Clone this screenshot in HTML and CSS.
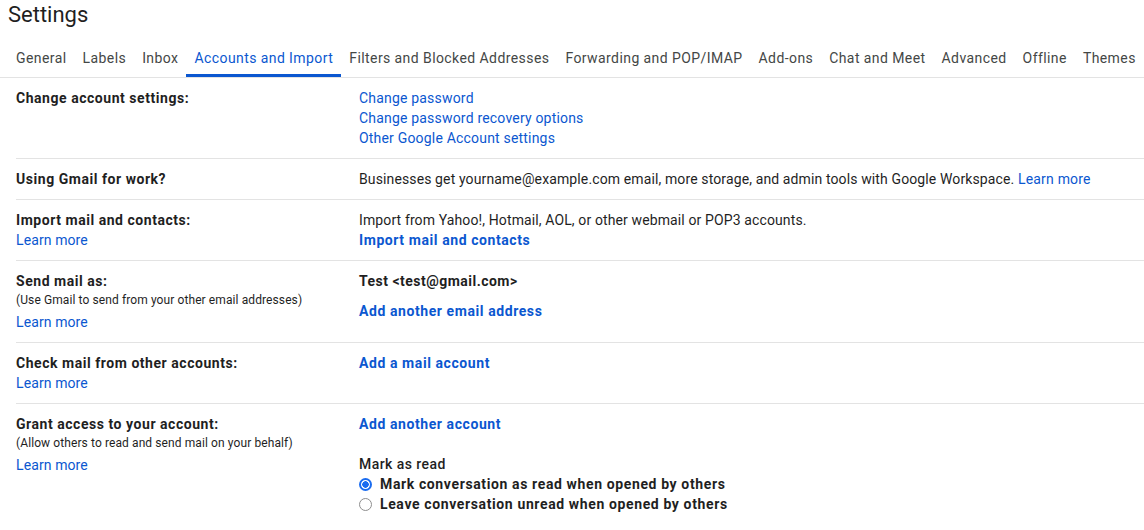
FILE: index.html
```html
<!DOCTYPE html>
<html lang="en">
<head>
<meta charset="utf-8">
<title>Settings</title>
<link rel="stylesheet" href="styles.css">
</head>
<body>
<div class="page">
  <h1 class="title">Settings</h1>
  <nav class="tabs">
    <a class="tab">General</a>
    <a class="tab">Labels</a>
    <a class="tab">Inbox</a>
    <a class="tab active">Accounts and Import</a>
    <a class="tab">Filters and Blocked Addresses</a>
    <a class="tab">Forwarding and POP/IMAP</a>
    <a class="tab">Add-ons</a>
    <a class="tab">Chat and Meet</a>
    <a class="tab">Advanced</a>
    <a class="tab">Offline</a>
    <a class="tab">Themes</a>
  </nav>

  <div class="rows">
    <section class="row">
      <div class="label"><div class="name">Change account settings:</div></div>
      <div class="value">
        <a class="link">Change password</a>
        <a class="link">Change password recovery options</a>
        <a class="link">Other Google Account settings</a>
      </div>
    </section>

    <section class="row">
      <div class="label"><div class="name">Using Gmail for work?</div></div>
      <div class="value">
        <p class="text">Businesses get yourname@example.com email, more storage, and admin tools with Google Workspace. <a class="inline-link">Learn more</a></p>
      </div>
    </section>

    <section class="row">
      <div class="label">
        <div class="name">Import mail and contacts:</div>
        <a class="link short">Learn more</a>
      </div>
      <div class="value">
        <p class="text">Import from Yahoo!, Hotmail, AOL, or other webmail or POP3 accounts.</p>
        <a class="link strong">Import mail and contacts</a>
      </div>
    </section>

    <section class="row">
      <div class="label">
        <div class="name">Send mail as:</div>
        <div class="sub">(Use Gmail to send from your other email addresses)</div>
        <a class="link short">Learn more</a>
      </div>
      <div class="value">
        <p class="text strong-text">Test &lt;test@gmail.com&gt;</p>
        <a class="link strong spaced">Add another email address</a>
      </div>
    </section>

    <section class="row">
      <div class="label">
        <div class="name">Check mail from other accounts:</div>
        <a class="link short">Learn more</a>
      </div>
      <div class="value">
        <a class="link strong">Add a mail account</a>
      </div>
    </section>

    <section class="row last">
      <div class="label">
        <div class="name">Grant access to your account:</div>
        <div class="sub">(Allow others to read and send mail on your behalf)</div>
        <a class="link short">Learn more</a>
      </div>
      <div class="value">
        <a class="link strong">Add another account</a>
        <div class="group">
          <div class="group-title">Mark as read</div>
          <label class="option"><span class="radio checked"></span>Mark conversation as read when opened by others</label>
          <label class="option"><span class="radio"></span>Leave conversation unread when opened by others</label>
        </div>
      </div>
    </section>
  </div>
</div>
</body>
</html>
```

FILE: styles.css
```css
* { box-sizing: border-box; }

body {
  margin: 0;
  background: #ffffff;
  color: #1f1f1f;
  font-family: Roboto, "Liberation Sans", Arial, sans-serif;
  font-size: 14px;
  overflow: hidden;
}

.title {
  margin: 0;
  padding-left: 8px;
  font-size: 22px;
  font-weight: 400;
  line-height: 30px;
  color: #1f1f1f;
}

.tabs {
  display: flex;
  margin-top: 8px;
  padding-left: 8px;
  border-bottom: 1px solid #e3e3e3;
  white-space: nowrap;
}

.tab {
  padding: 10px 8px 6px;
  line-height: 20px;
  font-size: 14px;
  letter-spacing: 0.42px;
  color: #444746;
  border-bottom: 3px solid transparent;
}

.tab.active {
  color: #0b57d0;
  border-bottom-color: #0b57d0;
}

.rows {
  margin-left: 16px;
}

.row {
  display: grid;
  grid-template-columns: 343px 1fr;
  padding: 10px 0;
  border-bottom: 1px solid #e3e3e3;
  line-height: 20px;
}

.row.last {
  border-bottom: none;
}

.label {
  display: flex;
  flex-direction: column;
  align-items: flex-start;
}

.name {
  font-weight: 700;
  letter-spacing: 0.54px;
  color: #1f1f1f;
}

.sub {
  font-size: 12px;
  line-height: 18px;
  letter-spacing: 0.1px;
  padding-bottom: 3px;
  color: #1f1f1f;
}

.value {
  display: flex;
  flex-direction: column;
  align-items: flex-start;
}

.text {
  margin: 0;
  letter-spacing: 0.12px;
  color: #1f1f1f;
}

.strong-text {
  font-weight: 700;
  letter-spacing: 0.48px;
}

.link,
.inline-link {
  color: #0b57d0;
  text-decoration: none;
  letter-spacing: 0.19px;
  cursor: pointer;
}

.link.short { letter-spacing: 0.1px; }

.link.strong {
  font-weight: 700;
  letter-spacing: 0.58px;
}

.link.spaced { margin-top: 10px; }

.group {
  margin-top: 20px;
  display: flex;
  flex-direction: column;
}

.group-title {
  font-weight: 500;
  letter-spacing: 0.45px;
  color: #1f1f1f;
}

.option {
  display: flex;
  align-items: center;
  gap: 8px;
  font-weight: 700;
  letter-spacing: 0.62px;
  color: #1f1f1f;
}

.radio {
  width: 13px;
  height: 13px;
  border-radius: 50%;
  border: 1px solid #8e8e8e;
  background: #fff;
  flex: none;
}

.radio.checked {
  border: 2px solid #1a6cf0;
  background: radial-gradient(circle, #1a6cf0 0 3px, #ffffff 3.5px);
}
```
